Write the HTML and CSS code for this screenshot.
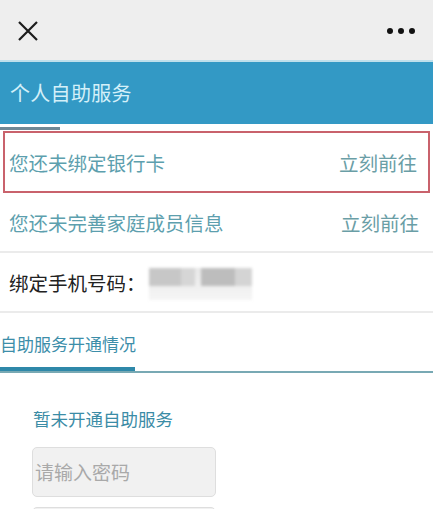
FILE: index.html
```html
<!DOCTYPE html>
<html lang="zh">
<head>
<meta charset="utf-8">
<link rel="stylesheet" href="styles.css">
</head>
<body>
<div class="page">
  <header class="topbar">
    <svg class="close" width="22" height="22" viewBox="0 0 22 22"><path d="M2 2L20 20M20 2L2 20" stroke="#1c1c1c" stroke-width="2.2" fill="none"/></svg>
    <div class="dots"><span></span><span></span><span></span></div>
  </header>
  <div class="titlebar">个人自助服务</div>
  <div class="tabmark"></div>
  <div class="row highlight">
    <span class="msg">您还未绑定银行卡</span>
    <span class="go">立刻前往</span>
  </div>
  <div class="row">
    <span class="msg">您还未完善家庭成员信息</span>
    <span class="go">立刻前往</span>
  </div>
  <div class="row phone">
    <span class="label">绑定手机号码：</span>
    <div class="blur">
      <span class="b1"></span><span class="b2"></span><span class="b3"></span><span class="b4"></span>
    </div>
  </div>
  <div class="section">
    <div class="section-tab">自助服务开通情况</div>
  </div>
  <div class="content">
    <div class="status">暂未开通自助服务</div>
    <div class="input">请输入密码</div>
    <div class="input"></div>
  </div>
</div>
</body>
</html>
```
FILE: styles.css
```css
html, body {
  margin: 0;
  padding: 0;
  background: #ffffff;
}
.page {
  width: 433px;
  height: 509px;
  overflow: hidden;
  font-family: "Noto Sans CJK SC", "Noto Sans", sans-serif;
}
.topbar {
  height: 60px;
  background: #eeeeee;
  display: flex;
  align-items: center;
  justify-content: space-between;
  padding: 0 18px 0 17px;
  box-sizing: border-box;
}
.close {
  display: block;
  margin-top: 2px;
}
.dots {
  display: flex;
  gap: 5px;
  margin-top: 2px;
}
.dots span {
  width: 6px;
  height: 6px;
  border-radius: 50%;
  background: #111;
}
.titlebar {
  height: 62px;
  border-top: 2px solid #bfe0ec;
  background: #3399c5;
  color: #d4f0f9;
  font-size: 20px;
  line-height: 62px;
  padding-left: 10px;
  letter-spacing: 0.3px;
}
.tabmark {
  width: 60px;
  height: 3px;
  margin-top: 3px;
  background: #6e8896;
}
.row {
  height: 58px;
  display: flex;
  align-items: center;
  justify-content: space-between;
  padding: 0 14px 0 9px;
  border-bottom: 2px solid #ebebeb;
  font-size: 19.5px;
}
.row.highlight {
  height: 58px;
  margin: 1px 3px 0 3px;
  padding: 0 11px 0 4px;
  border: 2px solid #c9626c;
}
.msg {
  color: #5d9fae;
}
.go {
  color: #6a9ea6;
}
.phone {
  justify-content: flex-start;
}
.label {
  color: #222222;
}
.blur {
  position: relative;
  width: 103px;
  height: 32px;
  margin-left: 3px;
  margin-top: 4px;
  background: linear-gradient(#e8e8e8, #f5f5f5);
  filter: blur(1.5px);
}
.blur span {
  position: absolute;
  top: 0;
  height: 18px;
  background: #c7c7c7;
}
.blur .b1 { left: 0; width: 32px; }
.blur .b2 { left: 32px; width: 14px; background: #d6d6d6; }
.blur .b3 { left: 52px; width: 34px; background: #bdbdbd; }
.blur .b4 { left: 86px; width: 17px; background: #d4d4d4; }
.section {
  margin-top: 14px;
  border-bottom: 2px solid #78a9b4;
  height: 44px;
}
.section-tab {
  width: 135px;
  height: 44px;
  box-sizing: border-box;
  border-bottom: 4px solid #2e88a9;
  color: #3d8ea9;
  font-size: 17px;
  line-height: 34px;
  white-space: nowrap;
}
.content {
  padding: 31px 0 0 32px;
}
.status {
  color: #3b8ca6;
  font-size: 17.5px;
  line-height: 30px;
  margin-left: 1px;
}
.input {
  width: 184px;
  height: 50px;
  box-sizing: border-box;
  margin-top: 13px;
  background: #f1f1f1;
  border: 1px solid #dedede;
  border-radius: 5px;
  color: #a9a9a9;
  font-size: 19px;
  line-height: 48px;
  padding-left: 2px;
}
.input + .input {
  margin-top: 10px;
}
```
